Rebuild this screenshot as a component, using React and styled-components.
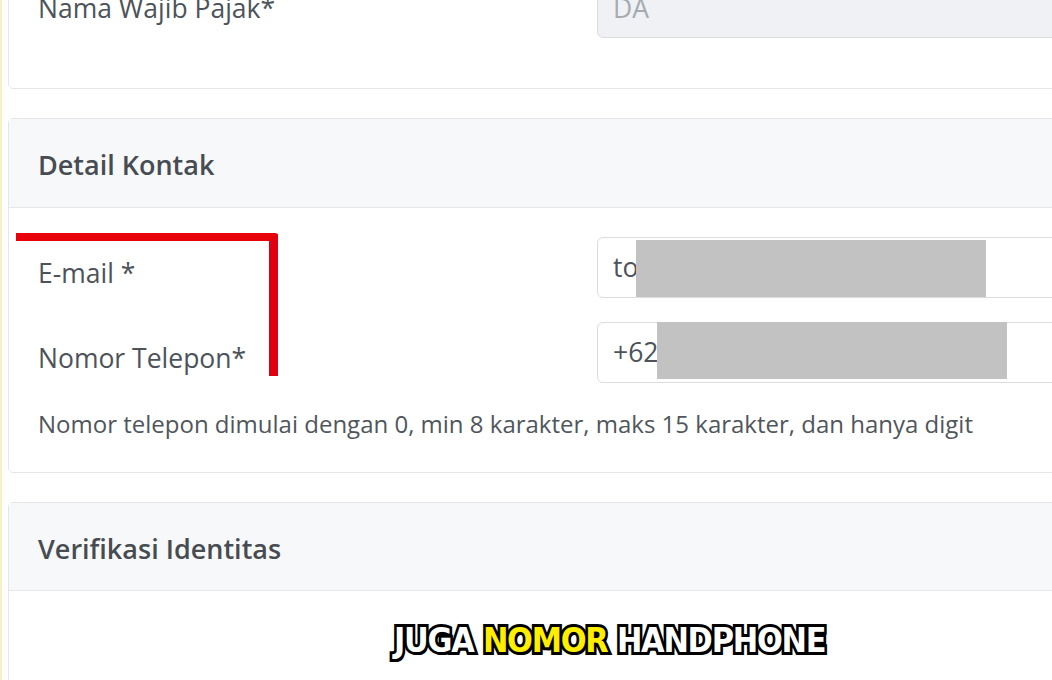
import React from 'react'
import styled, { createGlobalStyle } from 'styled-components'

const GlobalStyle = createGlobalStyle`
  html, body {
    margin: 0;
    padding: 0;
    background: #ffffff;
  }
  body {
    font-family: "Open Sans", "Noto Sans", sans-serif;
    color: #4a5057;
  }
`

const Viewport = styled.div`
  position: relative;
  width: 1052px;
  height: 680px;
  overflow: hidden;
  background: #fff;
  border-left: 2px solid #fbefc4;
  box-sizing: border-box;
`

const Page = styled.div`
  display: flex;
  flex-direction: column;
  gap: 29px;
  width: 1120px;
  margin-top: -40px;
  padding-left: 6px;
`

const Card = styled.section`
  border: 1.5px solid #e4e6e9;
  border-radius: 5px;
  background: #fff;
  box-sizing: border-box;
`

const CardHeader = styled.header`
  height: 88.5px;
  display: flex;
  align-items: center;
  padding: 4px 29px 0;
  background: #f7f8f9;
  border-bottom: 1.5px solid #e4e6e9;
  font-size: 27px;
  font-weight: 600;
  color: #474c53;
  box-sizing: border-box;
`

const CardBody = styled.div`
  display: flex;
  flex-direction: column;
  gap: 24px;
  padding: ${p => p.$pad || '29px 29px 32px'};
`

const Row = styled.div`
  display: flex;
  align-items: center;
`

const Label = styled.label`
  width: 559px;
  flex-shrink: 0;
  padding-top: ${p => (p.$low ? 11 : 0)}px;
  font-size: 26.5px;
  color: #4d535a;
`

const Input = styled.div`
  position: relative;
  flex: 1;
  height: 61px;
  display: flex;
  align-items: center;
  padding: 0 15px;
  border: 1.5px solid #dadde1;
  border-radius: 6px;
  background: ${p => (p.$disabled ? '#eff1f4' : '#fff')};
  color: ${p => (p.$disabled ? '#a6abb0' : '#4d535a')};
  font-size: 26.5px;
  box-sizing: border-box;
`

const Redact = styled.span`
  position: absolute;
  top: ${p => p.$top}px;
  left: ${p => p.$left}px;
  width: 350px;
  height: 57px;
  background: #c2c2c2;
`

const Help = styled.p`
  margin: 0;
  font-size: 24px;
  color: #50565c;
`

const Marker = styled.div`
  position: absolute;
  left: 14px;
  top: 233px;
  width: 262px;
  height: 143px;
  border-top: 8px solid #e8000c;
  border-right: 9px solid #e00010;
  border-top-right-radius: 3px;
  box-sizing: border-box;
`

const Caption = styled.div`
  position: absolute;
  left: 392px;
  top: 620px;
  font-family: "DejaVu Sans", "Inter", sans-serif;
  font-weight: 900;
  font-size: 34px;
  letter-spacing: -1.4px;
  transform: scaleX(0.895);
  transform-origin: left center;
  white-space: nowrap;
  color: #fff;
  -webkit-text-stroke: 6px #000;
  paint-order: stroke fill;
  text-shadow: 2px 3px 0 #000;
`

const Highlight = styled.span`
  color: #ffee00;
`

const App = () => (
  <Viewport>
    <GlobalStyle />
    <Page>
      <Card>
        <CardBody $pad="16px 29px 50px">
          <Row>
            <Label>Nama Wajib Pajak*</Label>
            <Input $disabled>DA</Input>
          </Row>
        </CardBody>
      </Card>

      <Card>
        <CardHeader>Detail Kontak</CardHeader>
        <CardBody>
          <Row>
            <Label $low>E-mail *</Label>
            <Input>
              to
              <Redact $top={2} $left={38} />
            </Input>
          </Row>
          <Row>
            <Label $low>Nomor Telepon*</Label>
            <Input>
              +62
              <Redact $top={-1} $left={59} />
            </Input>
          </Row>
          <Help>
            Nomor telepon dimulai dengan 0, min 8 karakter, maks 15 karakter, dan hanya digit
          </Help>
        </CardBody>
      </Card>

      <Card>
        <CardHeader>Verifikasi Identitas</CardHeader>
        <CardBody $pad="30px 29px 200px" />
      </Card>
    </Page>

    <Marker />
    <Caption>
      JUGA <Highlight>NOMOR</Highlight> HANDPHONE
    </Caption>
  </Viewport>
)

export default App
